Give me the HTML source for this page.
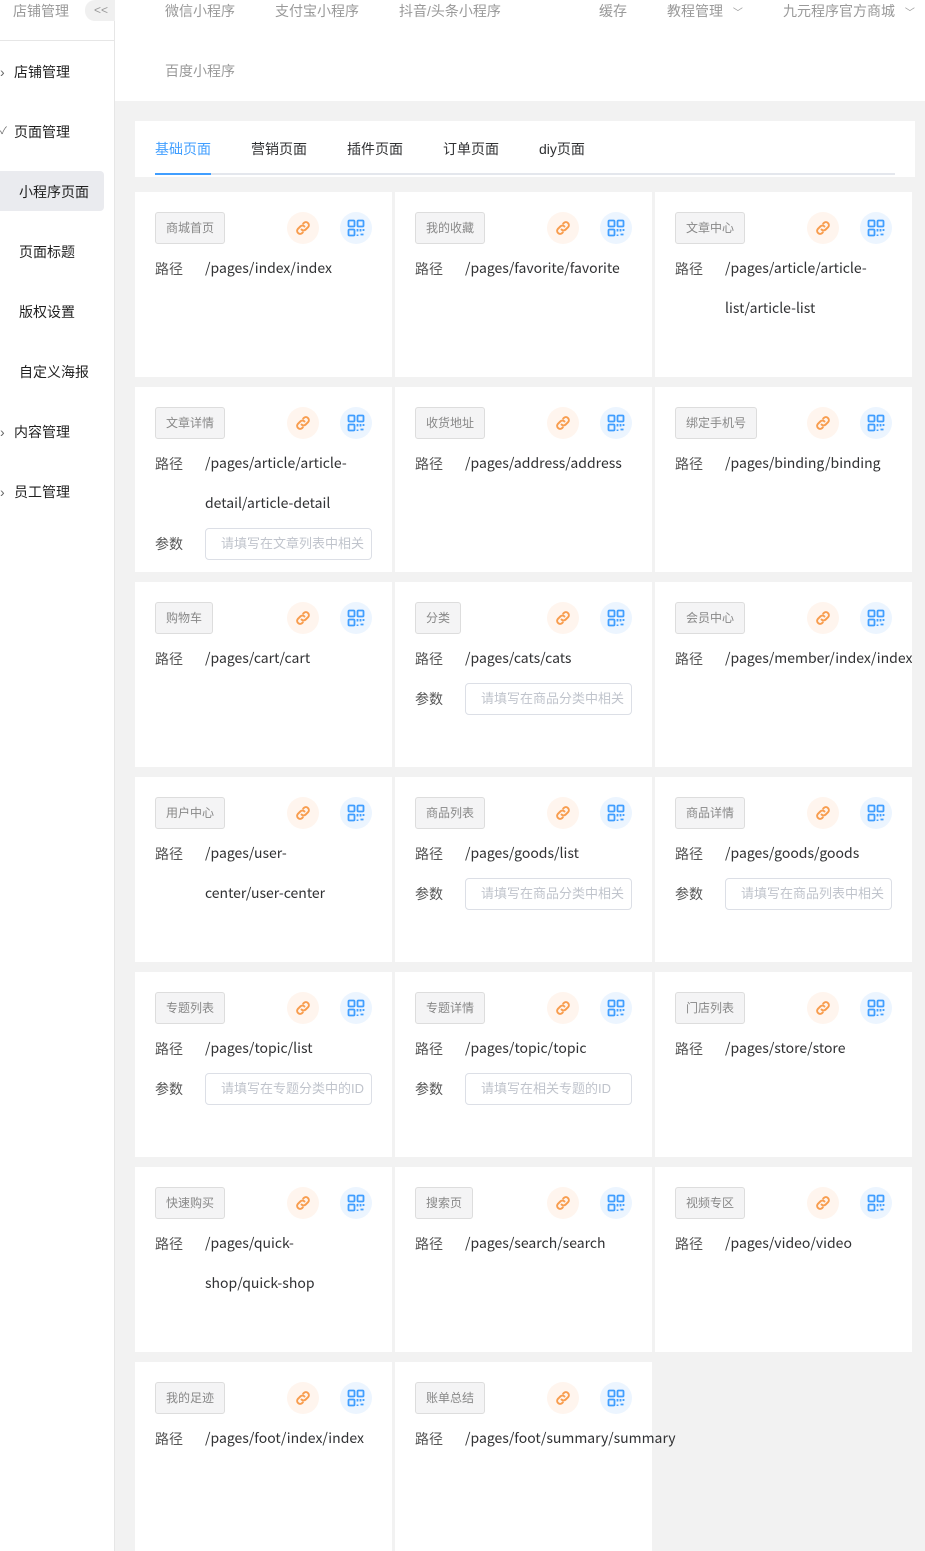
<!DOCTYPE html>
<html><head><meta charset="utf-8"><style>
*{margin:0;padding:0;box-sizing:border-box}
body{width:925px;height:1551px;overflow:hidden;background:#f2f2f2;font-family:"Liberation Sans","Noto Sans CJK SC",sans-serif;font-size:14px;color:#303133;position:relative}
.side{position:absolute;left:0;top:0;width:115px;height:1551px;background:#fff;border-right:1px solid #e6e6e6}
.abs{position:absolute;white-space:nowrap}
.hdr{position:absolute;left:115px;top:0;width:810px;height:101px;background:#fff}
.nav{color:#999;font-size:14px;line-height:22px}
.mi{font-size:14px;color:#1f1f1f;line-height:20px}
.tabs{position:absolute;left:135px;top:121px;width:780px;height:56px;background:#fff}
.card{position:absolute;width:257px;height:185px;background:#fff}
.tag{position:absolute;left:20px;top:20px;height:32px;padding:0 10px;border:1px solid #ddd;background:#f4f4f5;border-radius:3px;font-size:12px;color:#888;line-height:30px}
.ic{position:absolute;top:20px;width:32px;height:32px;border-radius:50%}
.ic svg{position:absolute;left:7px;top:7px}
.lb{position:absolute;left:20px;font-size:14px;color:#555;line-height:20px}
.vl{position:absolute;left:70px;font-family:"Noto Sans CJK SC",sans-serif;font-size:14px;color:#303133;line-height:20px;white-space:nowrap}
.inp{position:absolute;left:70px;width:167px;height:32px;border:1px solid #dcdfe6;border-radius:4px;color:#c0c4cc;font-size:13px;line-height:30px;padding-left:15px;overflow:hidden;white-space:nowrap}
</style></head><body>
<div class="side">
<div class="abs nav" style="left:13px;top:0">店铺管理</div>
<div class="abs" style="left:85px;top:0;width:30px;height:21px;background:#f0f0f0;border-radius:10px 0 0 10px;color:#999;font-size:12px;line-height:20px;padding-left:9px">&lt;&lt;</div>
<div class="abs" style="left:0;top:40px;width:114px;height:1px;background:#e6e6e6"></div>
<div class="abs" style="left:0;top:171px;width:104px;height:40px;background:#eaebef;border-radius:0 4px 4px 0"></div>
<div class="abs mi" style="left:0;top:62px;color:#666">›</div><div class="abs mi" style="left:14px;top:62px">店铺管理</div>
<div class="abs mi" style="left:0;top:122px;color:#666;font-size:10px">✓</div><div class="abs mi" style="left:14px;top:122px">页面管理</div>
<div class="abs mi" style="left:19px;top:182px">小程序页面</div>
<div class="abs mi" style="left:19px;top:242px">页面标题</div>
<div class="abs mi" style="left:19px;top:302px">版权设置</div>
<div class="abs mi" style="left:19px;top:362px">自定义海报</div>
<div class="abs mi" style="left:0;top:422px;color:#666">›</div><div class="abs mi" style="left:14px;top:422px">内容管理</div>
<div class="abs mi" style="left:0;top:482px;color:#666">›</div><div class="abs mi" style="left:14px;top:482px">员工管理</div>
</div>
<div class="hdr"></div>
<div class="abs nav" style="left:165px;top:0">微信小程序</div>
<div class="abs nav" style="left:275px;top:0">支付宝小程序</div>
<div class="abs nav" style="left:399px;top:0">抖音/头条小程序</div>
<div class="abs nav" style="left:599px;top:0">缓存</div>
<div class="abs nav" style="left:667px;top:0">教程管理 <span style="font-size:10px;margin-left:6px">﹀</span></div>
<div class="abs nav" style="left:783px;top:0">九元程序官方商城 <span style="font-size:10px;margin-left:6px">﹀</span></div>
<div class="abs nav" style="left:165px;top:60px">百度小程序</div>
<div class="tabs">
<div class="abs" style="left:20px;top:52px;width:740px;height:2px;background:#e4e7ed"></div>
<div class="abs" style="left:20px;top:52px;width:56px;height:2px;background:#409eff"></div>
<div class="abs" style="left:20px;top:18px;color:#409eff">基础页面</div>
<div class="abs" style="left:116px;top:18px">营销页面</div>
<div class="abs" style="left:212px;top:18px">插件页面</div>
<div class="abs" style="left:308px;top:18px">订单页面</div>
<div class="abs" style="left:404px;top:18px">diy页面</div>
</div>
<div id="cards"></div>
<script>
var link='<svg width="18" height="18" viewBox="0 0 24 24" fill="none" stroke="#f89d4f" stroke-width="2.6" stroke-linecap="round"><path d="M10 14a4 4 0 0 0 5.6 0l3.4-3.4a4 4 0 0 0-5.6-5.6l-1.2 1.2"/><path d="M14 10a4 4 0 0 0-5.6 0L5 13.4a4 4 0 0 0 5.6 5.6l1.2-1.2"/></svg>';
var qr='<svg width="18" height="18" viewBox="0 0 18 18" fill="none" stroke="#409eff" stroke-width="1.8"><rect x="1.5" y="1.5" width="6" height="6" rx="1"/><rect x="10.5" y="1.5" width="6" height="6" rx="1"/><rect x="1.5" y="10.5" width="6" height="6" rx="1"/><path d="M10.5 10v2.5M13.5 10v2.5M16.5 10v2M10.5 15.5v1.5M13.5 15.5h3"/></svg>';
var d=[["商城首页",["/pages/index/index"]],["我的收藏",["/pages/favorite/favorite"]],["文章中心",["/pages/article/article-","list/article-list"]],
["文章详情",["/pages/article/article-","detail/article-detail"],"请填写在文章列表中相关"],["收货地址",["/pages/address/address"]],["绑定手机号",["/pages/binding/binding"]],
["购物车",["/pages/cart/cart"]],["分类",["/pages/cats/cats"],"请填写在商品分类中相关"],["会员中心",["/pages/member/index/index"]],
["用户中心",["/pages/user-","center/user-center"]],["商品列表",["/pages/goods/list"],"请填写在商品分类中相关"],["商品详情",["/pages/goods/goods"],"请填写在商品列表中相关"],
["专题列表",["/pages/topic/list"],"请填写在专题分类中的ID"],["专题详情",["/pages/topic/topic"],"请填写在相关专题的ID"],["门店列表",["/pages/store/store"]],
["快速购买",["/pages/quick-","shop/quick-shop"]],["搜索页",["/pages/search/search"]],["视频专区",["/pages/video/video"]],
["我的足迹",["/pages/foot/index/index"]],["账单总结",["/pages/foot/summary/summary"]]];
var h='';
d.forEach(function(c,i){var col=i%3,row=Math.floor(i/3);var x=135+col*260,y=192+row*195;var ht=row==6?189:185;
h+='<div class="card" style="left:'+x+'px;top:'+y+'px;height:'+ht+'px'+(col==2?';overflow:hidden;width:257px':'')+'">';
h+='<div class="tag">'+c[0]+'</div><div class="ic" style="left:152px;background:#fff5ee">'+link+'</div><div class="ic" style="left:205px;background:#ecf5ff">'+qr+'</div>';
h+='<div class="lb" style="top:67px">路径</div>';
c[1].forEach(function(v,j){h+='<div class="vl" style="top:'+(66+j*40)+'px">'+v+'</div>';});
if(c[2]){var py=67+c[1].length*40;h+='<div class="lb" style="top:'+py+'px">参数</div><div class="inp" style="top:'+(py-6)+'px">'+c[2]+'</div>';}
h+='</div>';});
document.getElementById('cards').innerHTML=h;
</script>
</body></html>
